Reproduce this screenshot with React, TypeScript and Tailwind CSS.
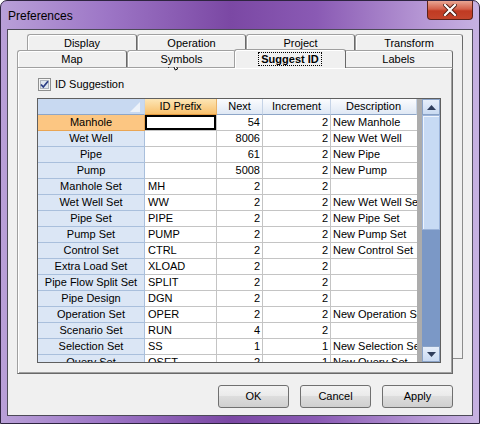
import React from "react";

type Row = {
  name: string;
  prefix: string;
  next: string;
  inc: string;
  desc: string;
};

const rows: Row[] = [
  { name: "Manhole", prefix: "", next: "54", inc: "2", desc: "New Manhole" },
  { name: "Wet Well", prefix: "", next: "8006", inc: "2", desc: "New Wet Well" },
  { name: "Pipe", prefix: "", next: "61", inc: "2", desc: "New Pipe" },
  { name: "Pump", prefix: "", next: "5008", inc: "2", desc: "New Pump" },
  { name: "Manhole Set", prefix: "MH", next: "2", inc: "2", desc: "" },
  { name: "Wet Well Set", prefix: "WW", next: "2", inc: "2", desc: "New Wet Well Set" },
  { name: "Pipe Set", prefix: "PIPE", next: "2", inc: "2", desc: "New Pipe Set" },
  { name: "Pump Set", prefix: "PUMP", next: "2", inc: "2", desc: "New Pump Set" },
  { name: "Control Set", prefix: "CTRL", next: "2", inc: "2", desc: "New Control Set" },
  { name: "Extra Load Set", prefix: "XLOAD", next: "2", inc: "2", desc: "" },
  { name: "Pipe Flow Split Set", prefix: "SPLIT", next: "2", inc: "2", desc: "" },
  { name: "Pipe Design", prefix: "DGN", next: "2", inc: "2", desc: "" },
  { name: "Operation Set", prefix: "OPER", next: "2", inc: "2", desc: "New Operation Set" },
  { name: "Scenario Set", prefix: "RUN", next: "4", inc: "2", desc: "" },
  { name: "Selection Set", prefix: "SS", next: "1", inc: "1", desc: "New Selection Set" },
  { name: "Query Set", prefix: "QSET", next: "2", inc: "1", desc: "New Query Set" },
];

const tabBase =
  "flex items-center justify-center border-t border-l border-r border-t-[#a0a0a0] border-l-[#a0a0a0] border-r-[#696969] rounded-t-[3px] bg-[#f0f0f0] shadow-[inset_1px_1px_0_#ffffff] whitespace-nowrap";

const Tab = ({ label, className }: { label: string; className: string }) => (
  <div className={`${tabBase} ${className}`}>{label}</div>
);

const cell = "h-[16px] leading-[15px] border-r border-b border-[#c4c4c4] bg-white overflow-hidden whitespace-nowrap";

const GridRow = ({ row, active }: { row: Row; active: boolean }) => (
  <div className="flex shrink-0">
    <div
      className={
        active
          ? "w-[107px] h-[16px] leading-[15px] text-center border-r border-b border-[#e9a554] bg-[#fcc682] whitespace-nowrap"
          : "w-[107px] h-[16px] leading-[15px] text-center border-r border-b border-[#a9bfdc] bg-[#dbe6f5] whitespace-nowrap"
      }
    >
      {row.name}
    </div>
    <div className={`${cell} w-[72px] pl-[3px] ${active ? "shadow-[inset_0_0_0_2px_#000000]" : ""}`}>
      {row.prefix}
    </div>
    <div className={`${cell} w-[46px] text-right pr-[2px]`}>{row.next}</div>
    <div className={`${cell} w-[68px] text-right pr-[2px]`}>{row.inc}</div>
    <div className={`${cell} w-[86px] pl-[2px] border-r-0`}>{row.desc}</div>
  </div>
);

const Arrow = ({ up }: { up: boolean }) => (
  <svg width="9" height="5" viewBox="0 0 9 5">
    <path d={up ? "M0 5 L4.5 0 L9 5 Z" : "M0 0 L4.5 5 L9 0 Z"} fill="#2f3e5c" />
  </svg>
);

const headerCell =
  "h-[16px] leading-[15px] text-center border-r border-b border-r-[#c5d3e6] border-b-[#8ea6c8] bg-[linear-gradient(#fbfcfe,#dfe8f4)] whitespace-nowrap overflow-hidden";

export default function App() {
  return (
    <div className="relative w-[480px] h-[424px] flex flex-col overflow-hidden rounded-t-[7px] border border-[#2e2440] bg-[linear-gradient(90deg,#b9a0d8_0%,#9d76c6_22%,#7b48a4_48%,#8a5ab4_66%,#b596d4_88%,#c7b2e2_100%)] font-['Liberation_Sans',Arial,sans-serif] text-[11px] text-black">
      {/* title bar */}
      <div className="h-[28px] flex items-start shrink-0">
        <div className="pl-[7px] pt-[7px] text-[12px] leading-[16px] text-black">Preferences</div>
        <div className="ml-auto mr-[6px] w-[46px] h-[19px] flex items-center justify-center rounded-b-[4px] border border-t-0 border-[#5c2218] bg-[linear-gradient(#e9a593,#d4604a_45%,#c03a22_55%,#c4452c)]">
          <svg width="14" height="12" viewBox="0 0 14 12">
            <path d="M2 1 L12 11 M12 1 L2 11" stroke="#4a1a12" strokeWidth="4" strokeLinecap="square" />
            <path d="M2 1 L12 11 M12 1 L2 11" stroke="#ffffff" strokeWidth="2.2" strokeLinecap="square" />
          </svg>
        </div>
      </div>

      {/* client area */}
      <div className="mx-[6px] w-[466px] h-[387px] border border-[#4d4a58] bg-[#f0f0f0] flex flex-col">
        {/* back tab row */}
        <div className="mt-[4px] pl-[19px] flex h-[16px] shrink-0">
          <Tab label="Display" className="w-[110px] h-[17px]" />
          <Tab label="Operation" className="w-[109px] h-[17px]" />
          <Tab label="Project" className="w-[109px] h-[17px]" />
          <Tab label="Transform" className="w-[108px] h-[17px]" />
        </div>

        <div className="pl-[9px] flex items-start">
          <div className="w-[436px] flex flex-col">
            {/* front tab row */}
            <div className="h-[17px] flex items-end shrink-0">
              <Tab label="Map" className="w-[110px] h-[17px] relative z-[1]" />
              <Tab label="Symbols" className="w-[109px] h-[17px] relative z-[1]" />
              <div className={`${tabBase} relative z-10 w-[112px] h-[19px] -mx-[2px] mb-[-1px] pb-[1px]`}>
                <span className="font-bold outline-1 outline-dotted outline-black px-[2px] leading-[12px]">
                  Suggest ID
                </span>
              </div>
              <Tab label="Labels" className="w-[109px] h-[17px] relative z-[1]" />
            </div>

            {/* panel */}
            <div className="h-[307px] border border-l-[#a0a0a0] border-t-[#a0a0a0] border-r-[#696969] border-b-[#696969] shadow-[inset_1px_1px_0_#ffffff,inset_-1px_-1px_0_#a0a0a0] pl-[19px] pt-[10px] flex flex-col">
              <div className="flex items-center h-[13px] pl-[1px]">
                <svg width="13" height="13" viewBox="0 0 13 13">
                  <rect x="0.5" y="0.5" width="12" height="12" fill="#f4f4f4" stroke="#8e8f8f" />
                  <rect x="2.5" y="2.5" width="8" height="8" fill="#dfe6ef" stroke="#aeb4be" />
                  <path d="M3 6.5 L5.3 9 L10 3.3" fill="none" stroke="#2c3f86" strokeWidth="1.8" />
                </svg>
                <span className="ml-[4px] leading-[13px]">ID Suggestion</span>
              </div>

              {/* grid */}
              <div className="mt-[7px] w-[404px] h-[265px] border border-[#5f5f5f] flex bg-[#acacac]">
                <div className="w-[379px] h-full overflow-hidden flex flex-col">
                  <div className="flex shrink-0">
                    <div className="w-[107px] h-[16px] border-r border-b border-r-[#c5d3e6] border-b-[#8ea6c8] bg-[#c8d9f1] flex items-end justify-end pr-[4px] pb-[2px]">
                      <svg width="10" height="10" viewBox="0 0 10 10">
                        <path d="M10 0 L10 10 L0 10 Z" fill="#eef3fa" />
                      </svg>
                    </div>
                    <div className="w-[72px] h-[16px] leading-[15px] text-center border-r border-b border-r-[#e9b36a] border-b-[#e39a3e] bg-[linear-gradient(#fde6b6,#f8c06c)]">
                      ID Prefix
                    </div>
                    <div className={`${headerCell} w-[46px]`}>Next</div>
                    <div className={`${headerCell} w-[68px]`}>Increment</div>
                    <div className={`${headerCell} w-[86px]`}>Description</div>
                  </div>
                  {rows.map((r, i) => (
                    <GridRow key={r.name} row={r} active={i === 0} />
                  ))}
                </div>
                <div className="w-[5px]" />
                {/* scrollbar */}
                <div className="w-[18px] h-full flex flex-col">
                  <div className="h-[16px] flex items-center justify-center border border-[#8aa2c6] bg-[linear-gradient(#e6eefa,#c9daf2)]">
                    <Arrow up />
                  </div>
                  <div className="h-[115px] border border-[#9cb4da] bg-[#c7daf4] shadow-[inset_1px_1px_0_#eef4fd]" />
                  <div className="flex-1 bg-[#7b98c6]" />
                  <div className="h-[16px] flex items-center justify-center border border-[#8aa2c6] bg-[linear-gradient(#e6eefa,#c9daf2)]">
                    <Arrow up={false} />
                  </div>
                </div>
              </div>
            </div>
          </div>
          {/* back page outline */}
          <div className="w-[10px] h-[309px] border-r border-b border-[#8c8c8c]" />
        </div>

        {/* buttons */}
        <div className="mt-[11px] flex justify-end gap-[11px] pr-[19px]">
          {["OK", "Cancel", "Apply"].map((b) => (
            <button
              key={b}
              className="w-[71px] h-[23px] rounded-[3px] border border-[#707070] bg-[linear-gradient(#f3f3f3,#ebebeb_45%,#dddddd_50%,#cfcfcf)] text-[11px] leading-[21px]"
            >
              {b}
            </button>
          ))}
        </div>
      </div>

      {/* mouse cursor */}
      <svg className="absolute left-[167px] top-[50px]" width="13" height="20" viewBox="0 0 13 20">
        <path
          d="M0.5 0.5 L0.5 16.5 L4.5 12.8 L7.3 19 L9.6 18 L6.9 11.9 L11.8 11.9 Z"
          fill="#ffffff"
          stroke="#000000"
          strokeWidth="1"
        />
      </svg>
    </div>
  );
}
